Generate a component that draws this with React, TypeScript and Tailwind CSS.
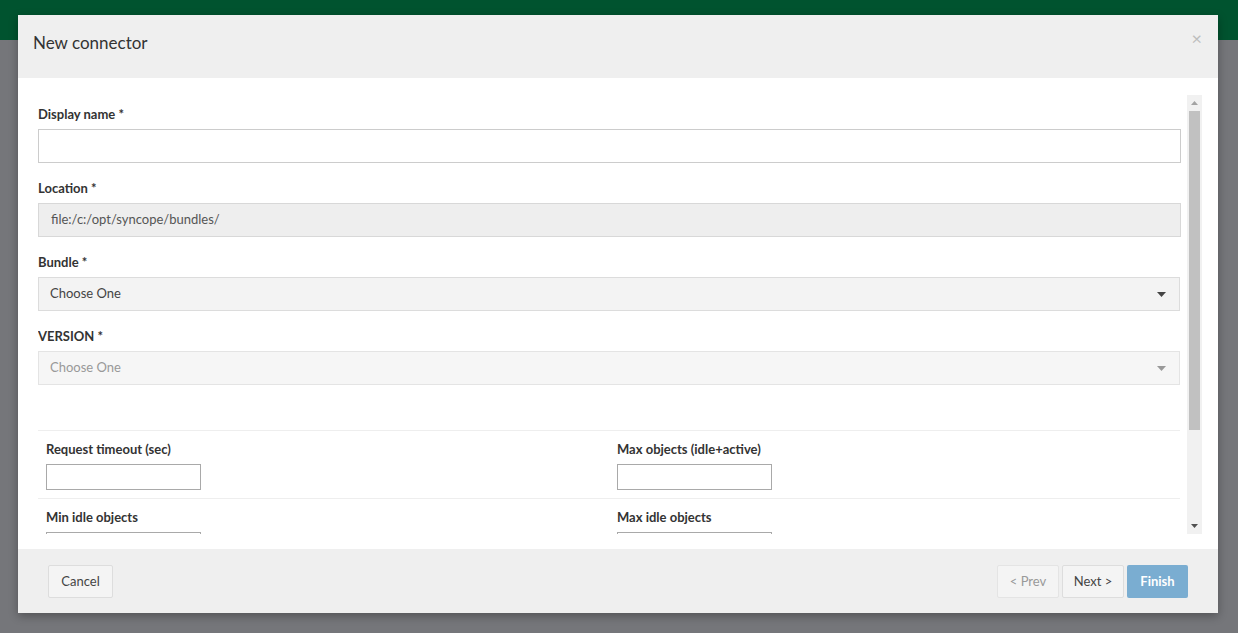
import React from 'react';

const font = { fontFamily: 'Lato, "Open Sans", sans-serif' };

const Caret: React.FC<{ light?: boolean }> = ({ light }) => (
  <svg width="9" height="5" viewBox="0 0 9 5" className={light ? 'text-[#999]' : 'text-[#444]'}>
    <path d="M0 0h9L4.5 5z" fill="currentColor" />
  </svg>
);

const Label: React.FC<{ children: React.ReactNode }> = ({ children }) => (
  <label className="block text-[13px] leading-[18px] font-bold text-[#333] mb-[6px]">{children}</label>
);

const poolFields = [
  ['Request timeout (sec)', 'Max objects (idle+active)'],
  ['Min idle objects', 'Max idle objects'],
];

const Scrollbar: React.FC = () => (
  <div className="w-[15px] ml-[6px] bg-[#f1f1f1] flex flex-col">
    <div className="h-[16px] flex items-center justify-center">
      <svg width="7" height="4" viewBox="0 0 7 4"><path d="M0 4h7L3.5 0z" fill="#a3a3a3" /></svg>
    </div>
    <div className="h-[319px] mx-[2px] bg-[#c1c1c1]" />
    <div className="flex-1 flex items-end justify-center pb-[6px]">
      <svg width="7" height="4" viewBox="0 0 7 4"><path d="M0 0h7L3.5 4z" fill="#505050" /></svg>
    </div>
  </div>
);

export default function App() {
  return (
    <div className="relative w-full h-[633px] overflow-hidden bg-[#75767a]" style={font}>
      <div className="h-[40px] bg-[#00532f]" />

      <div className="absolute left-[18px] top-[15px] w-[1200px] h-[598px] flex flex-col bg-white shadow-[0_3px_9px_rgba(0,0,0,0.3)]">
        {/* header */}
        <div className="h-[63px] bg-[#efefef] flex items-start justify-between pl-[15px] pr-[16px] pt-[19px]">
          <h4 className="text-[17px] text-[#333] leading-[18px]">New connector</h4>
          <span className="text-[18px] leading-none text-[#bdbdbd] mt-[-5px]">×</span>
        </div>

        {/* body */}
        <div className="flex-1 flex pl-[20px] pr-[16px] pt-[17px] pb-[15px] min-h-0">
          <div className="flex-1 overflow-hidden pt-[10px]">
            <div className="mb-[16px]">
              <Label>Display name *</Label>
              <div className="h-[34px] border border-[#ccc] bg-white" />
            </div>
            <div className="mb-[16px]">
              <Label>Location *</Label>
              <div className="h-[34px] border border-[#d8d8d8] bg-[#eeeeee] flex items-center px-[12px] text-[13px] text-[#555]">
                file:/c:/opt/syncope/bundles/
              </div>
            </div>
            <div className="mb-[16px]">
              <Label>Bundle *</Label>
              <div className="h-[34px] border border-[#dcdcdc] bg-[#f3f3f3] flex items-center justify-between pl-[11px] pr-[13px] text-[13px] text-[#444] mr-px">
                <span>Choose One</span>
                <Caret />
              </div>
            </div>
            <div className="mb-[45px]">
              <Label>VERSION *</Label>
              <div className="h-[34px] border border-[#e4e4e4] bg-[#f6f6f6] flex items-center justify-between pl-[11px] pr-[13px] text-[13px] text-[#999] mr-px">
                <span>Choose One</span>
                <Caret light />
              </div>
            </div>

            {poolFields.map((row, i) => (
              <div key={i} className="grid grid-cols-2 border-t border-[#eeeeee] pt-[9px] pb-[8px] mr-px">
                {row.map((name) => (
                  <div key={name} className="px-[8px]">
                    <Label>{name}</Label>
                    <div className="w-[155px] h-[26px] border border-[#a9a9a9] bg-white" />
                  </div>
                ))}
              </div>
            ))}
          </div>
          <Scrollbar />
        </div>

        {/* footer */}
        <div className="h-[64px] bg-[#efefef] flex items-start justify-between px-[30px] pt-[16px] text-[13px]">
          <button className="h-[33px] w-[65px] border border-[#dddddd] bg-[#f4f4f4] text-[#444] rounded-[2px]">Cancel</button>
          <div className="flex gap-[3px]">
            <button className="h-[33px] w-[62px] border border-[#e4e4e4] bg-[#f4f4f4] text-[#999] rounded-[2px]">&lt; Prev</button>
            <button className="h-[33px] w-[62px] border border-[#dddddd] bg-[#f4f4f4] text-[#444] rounded-[2px]">Next &gt;</button>
            <button className="h-[33px] w-[61px] bg-[#7aadd1] text-white font-bold rounded-[2px]">Finish</button>
          </div>
        </div>
      </div>
    </div>
  );
}
